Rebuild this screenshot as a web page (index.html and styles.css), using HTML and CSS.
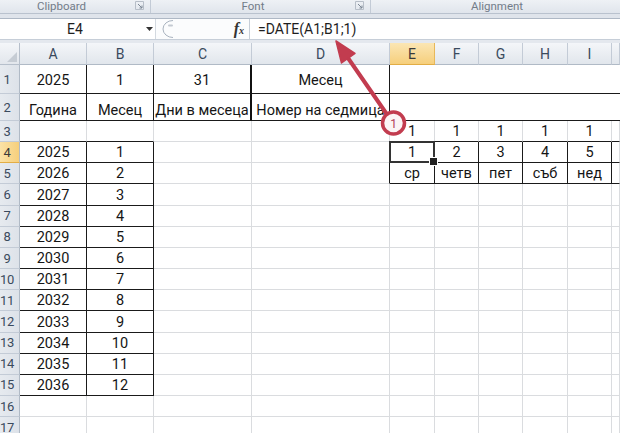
FILE: index.html
```html
<!DOCTYPE html>
<html>
<head>
<meta charset="utf-8">
<link rel="stylesheet" href="styles.css">
</head>
<body>
<div class="app">
  <div class="ribbon">
    <div class="grp g1"><span class="glabel">Clipboard</span><svg class="launch" width="9" height="9" viewBox="0 0 9 9"><path d="M0.5 0.5h8v8h-8z" fill="none" stroke="#b7bec8"/><path d="M3 3l4 4M7 4.5V7H4.5" fill="none" stroke="#7d8794" stroke-width="1"/></svg></div>
    <div class="grp g2"><span class="glabel">Font</span><svg class="launch" width="9" height="9" viewBox="0 0 9 9"><path d="M0.5 0.5h8v8h-8z" fill="none" stroke="#b7bec8"/><path d="M3 3l4 4M7 4.5V7H4.5" fill="none" stroke="#7d8794" stroke-width="1"/></svg></div>
    <div class="grp g3"><span class="glabel">Alignment</span></div>
  </div>
  <div class="strip"></div>
  <div class="fbar">
    <div class="namebox"><span class="nm">E4</span><svg class="dd" width="7" height="4" viewBox="0 0 7 4"><path d="M0 0h7L3.5 4z" fill="#333"/></svg></div>
    <div class="fxzone">
      <svg class="capsule" width="22" height="20" viewBox="0 0 22 20"><path d="M13 1.5 A10 8.5 0 0 0 13 18.5" fill="none" stroke="#a9b3bf" stroke-width="1"/><path d="M9 6.5h3" stroke="#c4cad2" stroke-width="2" stroke-linecap="round"/></svg>
      <span class="fx">f<span class="fxx">x</span></span>
    </div>
    <div class="formula">=DATE(A1;B1;1)</div>
  </div>
  <div class="gap"></div>
  <div class="sheet">
    <!-- header row -->
    <div class="corner"><svg width="10" height="10" viewBox="0 0 10 10"><path d="M10 0V10H0z" fill="#c6ccd4"/></svg></div>
    <div class="h">A</div><div class="h">B</div><div class="h">C</div><div class="h">D</div>
    <div class="h hsel">E</div><div class="h">F</div><div class="h">G</div><div class="h">H</div><div class="h">I</div><div class="h"></div>

    <!-- row 1 -->
    <div class="rh"><span>1</span></div>
    <div class="c rb bb p3">2025</div>
    <div class="c rb bb p3">1</div>
    <div class="c rt bb p3">31</div>
    <div class="c rb bb p3">Месец</div>
    <div class="c bb merge"></div>

    <!-- row 2 -->
    <div class="rh"><span>2</span></div>
    <div class="c rb bb">Година</div>
    <div class="c rb bb">Месец</div>
    <div class="c rt bb">Дни в месеца</div>
    <div class="c rb bb">Номер на седмица</div>
    <div class="c bb merge"></div>

    <!-- row 3 -->
    <div class="rh"><span>3</span></div>
    <div class="c bb"></div><div class="c bb"></div><div class="c"></div><div class="c"></div>
    <div class="c bb">1</div><div class="c bb">1</div><div class="c bb">1</div><div class="c bb">1</div><div class="c bb">1</div><div class="c bb"></div>

    <!-- row 4 -->
    <div class="rh rhsel"><span>4</span></div>
    <div class="c rb bb">2025</div><div class="c rb bb">1</div><div class="c"></div><div class="c rb"></div>
    <div class="c rb bb selcell">1</div><div class="c rb bb">2</div><div class="c rb bb">3</div><div class="c rb bb">4</div><div class="c rb bb">5</div><div class="c bb"></div>

    <!-- row 5 -->
    <div class="rh"><span>5</span></div>
    <div class="c rb bb">2026</div><div class="c rb bb">2</div><div class="c"></div><div class="c rb"></div>
    <div class="c rb bb">ср</div><div class="c rb bb">четв</div><div class="c rb bb">пет</div><div class="c rb bb">съб</div><div class="c rb bb">нед</div><div class="c bb"></div>

    <div class="rh"><span>6</span></div><div class="c rb bb">2027</div><div class="c rb bb">3</div><div class="c"></div><div class="c"></div><div class="c"></div><div class="c"></div><div class="c"></div><div class="c"></div><div class="c"></div><div class="c"></div>
    <div class="rh"><span>7</span></div><div class="c rb bb">2028</div><div class="c rb bb">4</div><div class="c"></div><div class="c"></div><div class="c"></div><div class="c"></div><div class="c"></div><div class="c"></div><div class="c"></div><div class="c"></div>
    <div class="rh"><span>8</span></div><div class="c rb bb">2029</div><div class="c rb bb">5</div><div class="c"></div><div class="c"></div><div class="c"></div><div class="c"></div><div class="c"></div><div class="c"></div><div class="c"></div><div class="c"></div>
    <div class="rh"><span>9</span></div><div class="c rb bb">2030</div><div class="c rb bb">6</div><div class="c"></div><div class="c"></div><div class="c"></div><div class="c"></div><div class="c"></div><div class="c"></div><div class="c"></div><div class="c"></div>
    <div class="rh"><span>10</span></div><div class="c rb bb">2031</div><div class="c rb bb">7</div><div class="c"></div><div class="c"></div><div class="c"></div><div class="c"></div><div class="c"></div><div class="c"></div><div class="c"></div><div class="c"></div>
    <div class="rh"><span>11</span></div><div class="c rb bb">2032</div><div class="c rb bb">8</div><div class="c"></div><div class="c"></div><div class="c"></div><div class="c"></div><div class="c"></div><div class="c"></div><div class="c"></div><div class="c"></div>
    <div class="rh"><span>12</span></div><div class="c rb bb">2033</div><div class="c rb bb">9</div><div class="c"></div><div class="c"></div><div class="c"></div><div class="c"></div><div class="c"></div><div class="c"></div><div class="c"></div><div class="c"></div>
    <div class="rh"><span>13</span></div><div class="c rb bb">2034</div><div class="c rb bb">10</div><div class="c"></div><div class="c"></div><div class="c"></div><div class="c"></div><div class="c"></div><div class="c"></div><div class="c"></div><div class="c"></div>
    <div class="rh"><span>14</span></div><div class="c rb bb">2035</div><div class="c rb bb">11</div><div class="c"></div><div class="c"></div><div class="c"></div><div class="c"></div><div class="c"></div><div class="c"></div><div class="c"></div><div class="c"></div>
    <div class="rh"><span>15</span></div><div class="c rb bb">2036</div><div class="c rb bb">12</div><div class="c"></div><div class="c"></div><div class="c"></div><div class="c"></div><div class="c"></div><div class="c"></div><div class="c"></div><div class="c"></div>
    <div class="rh"><span>16</span></div><div class="c"></div><div class="c"></div><div class="c"></div><div class="c"></div><div class="c"></div><div class="c"></div><div class="c"></div><div class="c"></div><div class="c"></div><div class="c"></div>
    <div class="rh"><span>17</span></div><div class="c"></div><div class="c"></div><div class="c"></div><div class="c"></div><div class="c"></div><div class="c"></div><div class="c"></div><div class="c"></div><div class="c"></div><div class="c"></div>
  </div>

  <svg class="annot" width="620" height="433" viewBox="0 0 620 433">
    <line x1="348" y1="58" x2="386" y2="113" stroke="#c23c4f" stroke-width="4" stroke-linecap="round"/>
    <polygon points="336,41 341.5,63 355,53.5" fill="#c23c4f" stroke="#c23c4f" stroke-width="1.5" stroke-linejoin="round"/>
    <circle cx="393.5" cy="123" r="11" fill="#fbf4f5" stroke="#c23c4f" stroke-width="3.5"/>
    <text x="393.5" y="127.5" text-anchor="middle" class="badge">1</text>
  </svg>
</div>
</body>
</html>
```

FILE: styles.css
```css
* { box-sizing: border-box; }

body {
  margin: 0;
  background: #ffffff;
  font-family: Roboto, "Liberation Sans", sans-serif;
}

.app {
  position: relative;
  width: 620px;
  height: 433px;
  overflow: hidden;
  background: #ffffff;
}

/* ribbon group labels */
.ribbon {
  display: flex;
  height: 14px;
  background: linear-gradient(#eef1f5, #e0e5ec);
  border-bottom: 1px solid #b9c2ce;
}

.grp {
  display: flex;
  align-items: flex-start;
  border-right: 1px solid #c3cbd6;
  flex-shrink: 0;
}

.g1 { width: 151px; }
.g2 { width: 220px; }
.g3 { width: 252px; border-right: none; }

.glabel {
  flex: 1;
  text-align: center;
  font-size: 11.5px;
  line-height: 12px;
  color: #727c89;
}

.g1 .glabel { padding-right: 12px; }

.launch {
  margin: 1px 6px 0 0;
}

.strip {
  height: 4px;
  background: #dfe4eb;
}

/* formula bar */
.fbar {
  display: flex;
  height: 22px;
  background: #ffffff;
  border-top: 1px solid #aeb8c5;
  border-bottom: 1px solid #c6ced8;
}

.namebox {
  width: 156px;
  display: flex;
  align-items: center;
  border-right: 1px solid #d3d9e0;
  font-size: 14px;
  color: #1e1e1e;
}

.nm {
  flex: 1;
  text-align: center;
  padding-left: 4px;
}

.dd {
  margin-right: 2px;
}

.fxzone {
  width: 94px;
  display: flex;
  align-items: center;
  border-right: 1px solid #c6ced8;
  background: #fbfcfd;
}

.capsule {
  margin-left: 4px;
}

.fx {
  margin-left: auto;
  margin-right: 5px;
  font-family: "Liberation Serif", serif;
  font-style: italic;
  font-weight: bold;
  font-size: 16px;
  color: #333333;
}

.fxx {
  font-size: 10px;
}

.formula {
  flex: 1;
  display: flex;
  align-items: center;
  padding-left: 8px;
  font-size: 14px;
  color: #1e1e1e;
}

.gap {
  height: 3px;
  background: #e4e8ee;
}

/* sheet grid */
.sheet {
  display: grid;
  grid-template-columns: 20px 67px 67px 98px 138px 45px 44px 44px 45px 44px 8px;
  grid-template-rows: 22px 29px 27px repeat(15, 21.17px);
}

.corner {
  background: linear-gradient(#f4f6f9, #e2e6ec);
  border-right: 1px solid #b6bfcb;
  border-bottom: 1px solid #b6bfcb;
  display: flex;
  align-items: flex-end;
  justify-content: flex-end;
  padding: 0 2px 2px 0;
}

.h {
  background: linear-gradient(#f4f6f9, #e1e6ec);
  border-right: 1px solid #c3cbd6;
  border-bottom: 1px solid #b0bac6;
  display: flex;
  align-items: center;
  justify-content: center;
  font-size: 14px;
  color: #3a4a5d;
}

.hsel {
  background: linear-gradient(#fbe6b4, #f6cf7c);
  border-right-color: #e7b85a;
  border-bottom-color: #e2ad45;
  color: #3a3a3a;
}

.rh {
  background: linear-gradient(90deg, #e6eaef, #dde2e9);
  border-right: 1px solid #b0bac6;
  border-bottom: 1px solid #c3cbd6;
  display: flex;
  align-items: center;
  font-size: 13px;
  letter-spacing: -0.3px;
  color: #3a4a5d;
}

.rh span {
  width: 14px;
  white-space: nowrap;
  display: flex;
  justify-content: center;
}

.rhsel {
  background: linear-gradient(90deg, #fbe2a6, #f6cf7c);
  border-bottom-color: #e2ad45;
  color: #3a3a3a;
}

.c {
  border-right: 1px solid #dadcdf;
  border-bottom: 1px solid #dadcdf;
  display: flex;
  align-items: flex-end;
  justify-content: center;
  padding-bottom: 1px;
  font-size: 14.5px;
  line-height: 17px;
  color: #151515;
  white-space: nowrap;
}

.p3 { padding-bottom: 4px; }

.rb { border-right: 1px solid #1a1a1a; }
.rt { border-right: 2px solid #111111; }
.bb { border-bottom: 1px solid #1a1a1a; }

.merge {
  grid-column: span 6;
  border-right: none;
}

.selcell {
  position: relative;
}

.selcell::after {
  content: "";
  position: absolute;
  left: -1px;
  top: -1px;
  right: -1px;
  bottom: -1px;
  border: 2px solid #333333;
}

.selcell::before {
  content: "";
  position: absolute;
  right: -4px;
  bottom: -4px;
  width: 7px;
  height: 7px;
  background: #222222;
  border: 1px solid #ffffff;
  z-index: 2;
}

/* annotation overlay */
.annot {
  position: absolute;
  left: 0;
  top: 0;
  pointer-events: none;
}

.badge {
  font-family: Roboto, "Liberation Sans", sans-serif;
  font-size: 12px;
  fill: #b23d58;
}
```
